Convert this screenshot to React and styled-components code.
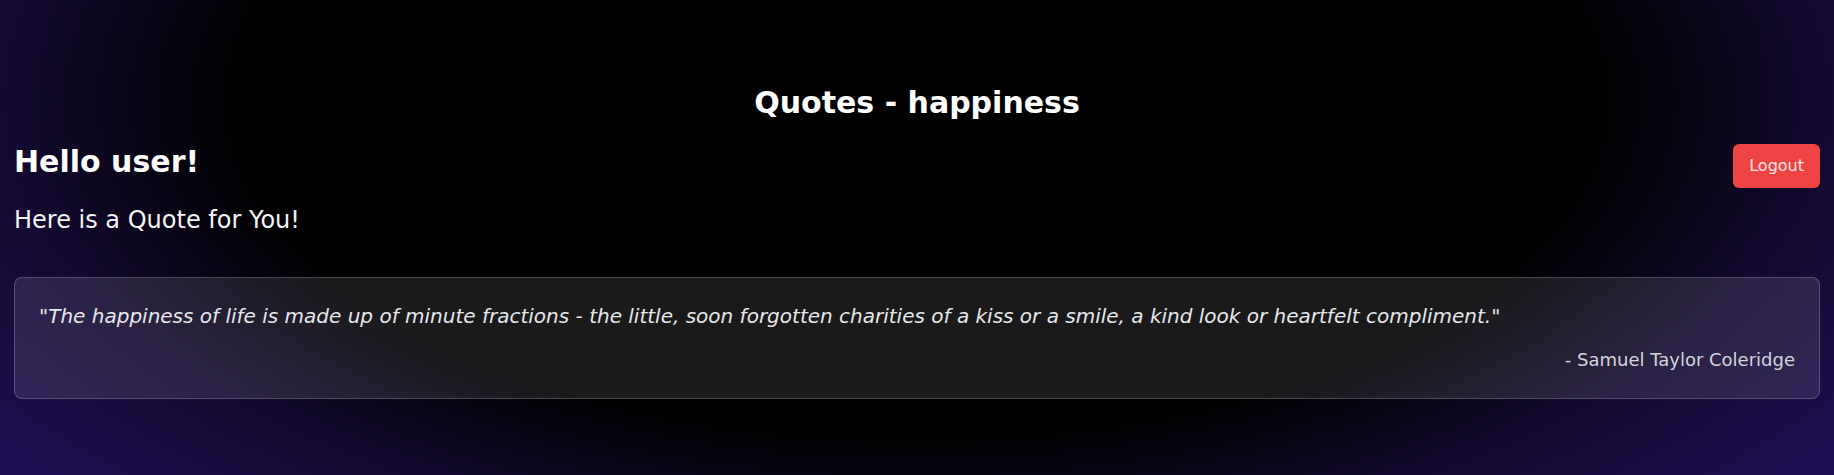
import React from 'react'
import styled, { createGlobalStyle } from 'styled-components'

const GlobalStyle = createGlobalStyle`
    html, body {
        margin: 0;
        padding: 0;
        background: #000;
    }
    * {
        box-sizing: border-box;
    }
`

const quote = {
    category: 'happiness',
    text: 'The happiness of life is made up of minute fractions - the little, soon forgotten charities of a kiss or a smile, a kind look or heartfelt compliment.',
    author: 'Samuel Taylor Coleridge',
}

const App = () => {
    return (
        <Page>
            <GlobalStyle />
            <Title>Quotes - {quote.category}</Title>
            <HeaderRow>
                <Greeting>Hello user!</Greeting>
                <LogoutBtn>Logout</LogoutBtn>
            </HeaderRow>
            <Subtitle>Here is a Quote for You!</Subtitle>
            <QuoteCard>
                <QuoteText>"{quote.text}"</QuoteText>
                <Author>- {quote.author}</Author>
            </QuoteCard>
        </Page>
    )
}

export default App

const Page = styled.div`
    min-height: 100vh;
    padding: 85px 14px 0;
    font-family: 'DejaVu Sans', 'Liberation Sans', sans-serif;
    color: #fff;
    background: radial-gradient(1000px 495px at 50% 100px, #000 68%, #140a32 92%, #1e0f55 120%);
`

const Title = styled.h1`
    margin: 0 0 23px;
    font-size: 30px;
    line-height: 36px;
    font-weight: 700;
    text-align: center;
`

const HeaderRow = styled.div`
    display: flex;
    justify-content: space-between;
    align-items: flex-start;
`

const Greeting = styled.h2`
    margin: 0;
    font-size: 30px;
    line-height: 36px;
    font-weight: 700;
`

const LogoutBtn = styled.button`
    height: 44px;
    padding: 0 16px;
    border: none;
    border-radius: 6px;
    background-color: #ef4444;
    color: #fde7e7;
    font-family: inherit;
    font-size: 16px;
    line-height: 24px;
    cursor: pointer;
`

const Subtitle = styled.p`
    margin: 16px 0 0;
    font-size: 24px;
    line-height: 32px;
    color: #f3f4f6;
`

const QuoteCard = styled.div`
    margin-top: 41px;
    padding: 24px;
    border: 1px solid rgba(255, 255, 255, 0.2);
    border-radius: 8px;
    background-color: rgba(255, 255, 255, 0.1);
`

const QuoteText = styled.p`
    margin: 0;
    font-size: 20px;
    line-height: 28px;
    font-style: italic;
    color: #e5e7eb;
`

const Author = styled.p`
    margin: 16px 0 0;
    font-size: 18px;
    line-height: 28px;
    text-align: right;
    color: #d1d5db;
`
